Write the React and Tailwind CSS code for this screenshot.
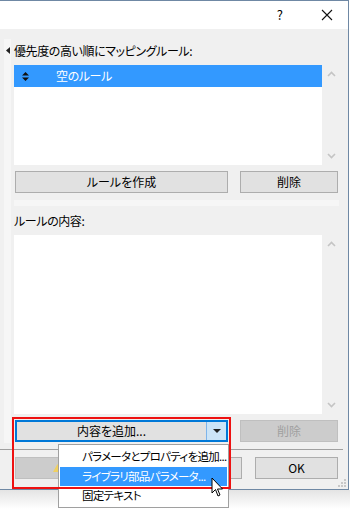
import React from 'react'

// Mapping-rule dialog with the "add content" split button open.
const font = { fontFamily: '"Noto Sans CJK JP", "Noto Sans", sans-serif' }

function ScrollArrows({ height }) {
  return (
    <div className={`flex w-[18px] flex-col items-center justify-between py-[6px] ${height}`}>
      <svg width="9" height="6" viewBox="0 0 9 6">
        <path d="M1 5 L4.5 1.5 L8 5" fill="none" stroke="#c4c4c4" strokeWidth="1.6" />
      </svg>
      <svg width="9" height="6" viewBox="0 0 9 6">
        <path d="M1 1 L4.5 4.5 L8 1" fill="none" stroke="#c4c4c4" strokeWidth="1.6" />
      </svg>
    </div>
  )
}

function Button({ className = '', children, disabled }) {
  return (
    <div
      className={`flex h-[22px] items-center justify-center whitespace-nowrap border text-[12px] ${
        disabled ? 'border-[#bfbfbf] bg-[#cccccc] text-[#a0a0a0]' : 'border-[#adadad] bg-[#e1e1e1] text-black'
      } ${className}`}
    >
      {children}
    </div>
  )
}

export default function App() {
  return (
    <div className="relative h-[509px] w-[350px] overflow-hidden bg-white [font-feature-settings:'palt']" style={font}>
      <div className="flex h-[490px] w-[349px] flex-col border-r border-t border-b border-[#6f88a4]">
        {/* title bar */}
        <div className="flex h-[30px] items-center justify-end bg-white">
          <span className="mr-[38px] text-[13px] text-black">?</span>
          <svg className="mr-[15px]" width="12" height="12" viewBox="0 0 12 12">
            <path d="M1 1 L11 11 M11 1 L1 11" stroke="#111" strokeWidth="1.1" />
          </svg>
        </div>

        <div className="flex flex-1 flex-col bg-[#f0f0f0]">
          <div className="flex">
            <div className="w-[14px] pt-[10px]">
              <div className="ml-[4px] flex h-[404px] w-[7px] justify-center bg-[#f6f6f6] pt-[8px]">
                <svg width="4" height="7" viewBox="0 0 4 7">
                  <path d="M4 0 L0 3.5 L4 7 Z" fill="#222" />
                </svg>
              </div>
            </div>

            <div className="flex w-[326px] flex-col pt-[11px]">
              <div className="flex h-[22px] items-center whitespace-nowrap text-[12px] tracking-[-0.4px] text-black">優先度の高い順にマッピングルール:</div>

              <div className="mt-[3px] flex h-[100px]">
                <div className="w-[308px] bg-white">
                  <div className="flex h-[22px] items-center bg-[#3399ff] text-[12px] tracking-[-0.4px] text-white">
                    <svg className="ml-[8px]" width="7" height="9" viewBox="0 0 7 9">
                      <path d="M3.5 0 L7 3.5 H0 Z M0 5.5 H7 L3.5 9 Z" fill="#111" />
                    </svg>
                    <span className="ml-[27px]">空のルール</span>
                  </div>
                </div>
                <ScrollArrows height="h-[100px]" />
              </div>

              <div className="mt-[6px] flex">
                <Button className="ml-[1px] w-[213px]">ルールを作成</Button>
                <Button className="ml-[12px] w-[98px]">削除</Button>
              </div>

              <div className="mt-[7px] h-[6px] w-[325px] bg-[#f6f6f6]" />

              <div className="mt-[4px] flex h-[22px] items-center text-[12px] tracking-[-0.4px] text-black">ルールの内容:</div>

              <div className="mt-[3px] flex h-[179px]">
                <div className="w-[308px] bg-white" />
                <ScrollArrows height="h-[179px]" />
              </div>

              <div className="mt-[6px] flex">
                <div className="ml-[1px] flex h-[22px] w-[213px] border-2 border-[#0078d7] bg-[#e1e1e1] text-[12px]">
                  <div className="flex flex-1 items-center justify-center whitespace-nowrap text-black">内容を追加...</div>
                  <div className="flex w-[20px] items-center justify-center border-l border-[#7eb4ea] bg-[#cce4f7]">
                    <svg width="8" height="4" viewBox="0 0 8 4">
                      <path d="M0 0 H8 L4 4 Z" fill="#222" />
                    </svg>
                  </div>
                </div>
                <Button disabled className="ml-[12px] w-[98px]">削除</Button>
              </div>
            </div>
          </div>

          <div className="mt-[6px] h-px w-[343px] bg-[#a0a0a0]" />

          {/* bottom buttons, mostly hidden behind the open menu */}
          <div className="mt-[7px] flex">
            <div className="ml-[15px] flex h-[22px] w-[124px] items-center border border-[#bfbfbf] bg-[#cccccc] pl-[37px]">
              <svg width="9" height="8" viewBox="0 0 9 8">
                <path d="M4.5 0 L9 8 H0 Z" fill="#f0d060" />
              </svg>
            </div>
            <Button className="ml-[8px] w-[95px]" />
            <Button className="ml-[13px] w-[83px]">OK</Button>
          </div>

          <div className="flex flex-1 items-end justify-end pb-[2px] pr-[2px]">
            <svg width="8" height="8" viewBox="0 0 8 8">
              <rect x="6" y="0" width="2" height="2" fill="#c8c8c8" />
              <rect x="3" y="3" width="2" height="2" fill="#c8c8c8" />
              <rect x="6" y="3" width="2" height="2" fill="#c8c8c8" />
              <rect x="0" y="6" width="2" height="2" fill="#c8c8c8" />
              <rect x="3" y="6" width="2" height="2" fill="#c8c8c8" />
              <rect x="6" y="6" width="2" height="2" fill="#c8c8c8" />
            </svg>
          </div>
        </div>
      </div>

      {/* window shadow */}
      <div className="h-[19px] w-[350px] bg-gradient-to-b from-[#e4e4e4] to-white" />

      {/* open dropdown menu */}
      <div className="absolute left-[58px] top-[444px] flex h-[64px] w-[171px] flex-col whitespace-nowrap border border-[#a0a0a0] bg-white py-px text-[11.5px] leading-none tracking-[-0.7px] text-black">
        <div className="flex h-[21px] items-center pl-[23px]">パラメータとプロパティを追加...</div>
        <div className="mx-px flex h-[20px] items-center bg-[#3399ff] pl-[22px] text-white">ライブラリ部品パラメータ...</div>
        <div className="flex h-[20px] items-center pl-[23px]">固定テキスト</div>
      </div>

      {/* red highlight frame */}
      <div className="absolute left-[12px] top-[417px] h-[72px] w-[219px] border-2 border-[#ee1111]" />

      {/* mouse cursor */}
      <svg className="absolute left-[211px] top-[477px]" width="13" height="21" viewBox="0 0 13 21">
        <path d="M1 1 L1 16 L4.5 12.5 L7 19 L9 18 L6.5 12 L11.5 12 Z" fill="white" stroke="black" strokeWidth="1" />
      </svg>
    </div>
  )
}
